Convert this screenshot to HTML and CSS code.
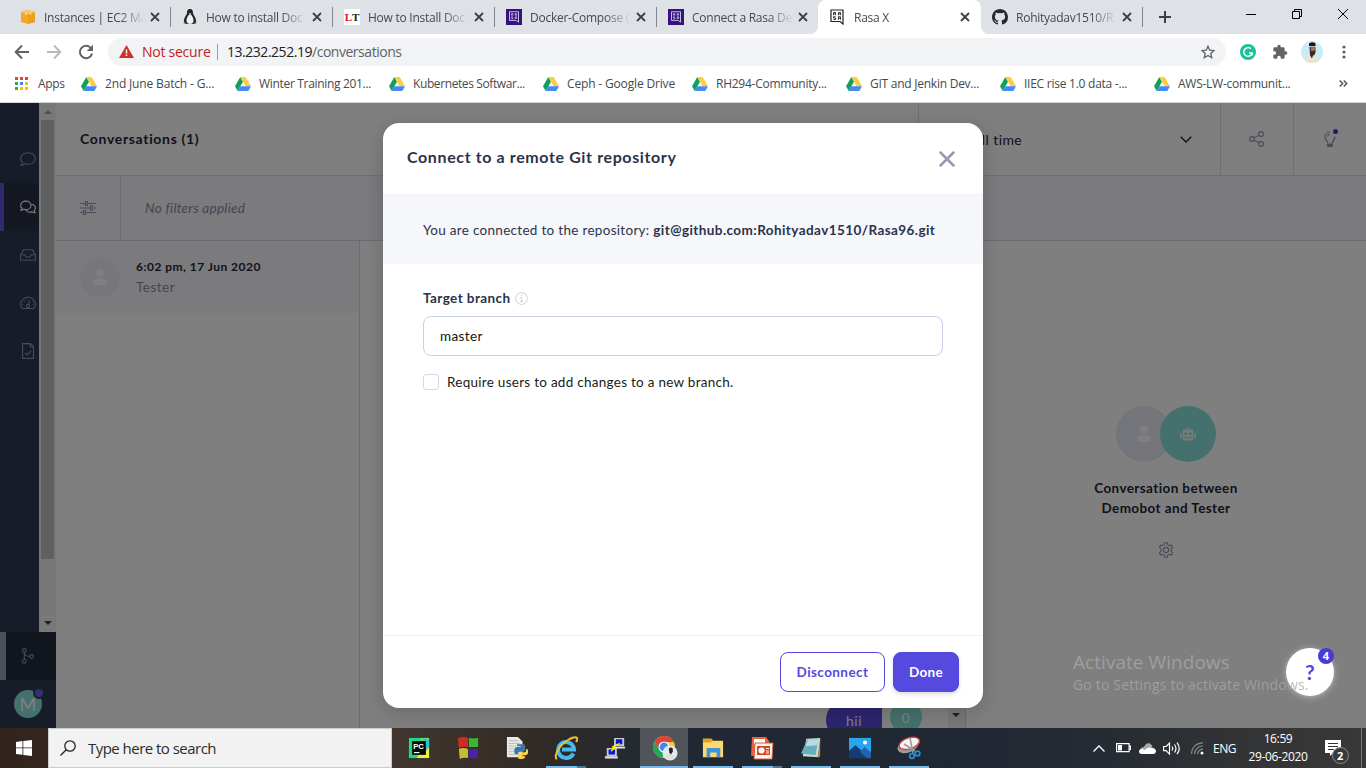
FILE: index.html
```html
<!DOCTYPE html>
<html lang="en">
<head>
<meta charset="utf-8">
<title>Rasa X</title>
<link rel="stylesheet" href="styles.css">
</head>
<body>
<svg class="defs" width="0" height="0">
  <symbol id="close" viewBox="0 0 10 10"><path d="M1 1l8 8M9 1l-8 8" fill="none" stroke="#3c4043" stroke-width="1.8"/></symbol>
  <symbol id="drive" viewBox="0 0 16 14"><path d="M5.3 0L0 9.3 2.7 14 8 4.7z" fill="#11a05c"/><path d="M5.3 0h5.4L16 9.3h-5.4z" fill="#ffcd40"/><path d="M5.3 9.3H16L13.3 14H2.7z" fill="#4688f4"/></symbol>
  <symbol id="rasa" viewBox="0 0 14 16"><path d="M1 1h12v14l-3-2.500H1z" fill="none" stroke="currentColor" stroke-width="1.200"/><path d="M3.500 6.200V3.500h2v1.400h-2M5.500 5v1.200M8.500 6.200V3.500h2v2.700M8.500 5h2M5.500 7.700h-2V9h2v1.500h-2M8.500 10.700v-3h2v3M8.500 9.300h2" fill="none" stroke="currentColor" stroke-width=".9"/></symbol>
  <symbol id="user" viewBox="0 0 14 16"><circle cx="7" cy="4" r="4"/><path d="M0 14c0-3 1.500-5 4-5h6c2.500 0 4 2 4 5 0 1.300-.7 2-2 2H2c-1.300 0-2-.7-2-2z"/></symbol>
</svg>
<div class="screen">
  <div class="tabs">
    <div class="tab"><svg class="fav" viewBox="0 0 16 16"><path d="M1 3l7-2 7 2v10l-7 2-7-2z" fill="#f5a623"/><path d="M8 5l7-2v10l-7 2z" fill="#e9a21f"/><path d="M1 3l7-2 7 2-7 2z" fill="#fbc95c"/><path d="M5 3.500v2.200L7 6V4M9.500 4v2l2-.5V3.500" fill="#ffd98a"/></svg><span class="tt">Instances | EC2 Ma</span><svg class="x"><use href="#close"/></svg></div>
    <div class="tab"><svg class="fav" viewBox="0 0 16 16"><path d="M8 0c2.500 0 3 2 3 4 0 2 3 4 3 8 0 2-1 3-3 3H5c-2 0-3-1-3-3 0-4 3-6 3-8s.5-4 3-4z" fill="#222"/><path d="M8 5c2 1 3.500 4 3.500 6.500S10 15 8 15s-3.500-1-3.500-3.500S6 6 8 5z" fill="#eee"/><path d="M6.500 4h3L8 5.800z" fill="#e9a53a"/><path d="M1 12l3 3H2zM15 12l-3 3h2z" fill="#c98d4b"/></svg><span class="tt">How to install Doc</span><svg class="x"><use href="#close"/></svg></div>
    <div class="tab"><span class="fav lt"><b>L</b>T</span><span class="tt">How to Install Doc</span><svg class="x"><use href="#close"/></svg></div>
    <div class="tab"><span class="fav rs"><svg viewBox="0 0 14 16"><use href="#rasa"/></svg></span><span class="tt">Docker-Compose (</span><svg class="x"><use href="#close"/></svg></div>
    <div class="tab nosep"><span class="fav rs"><svg viewBox="0 0 14 16"><use href="#rasa"/></svg></span><span class="tt">Connect a Rasa De</span><svg class="x"><use href="#close"/></svg></div>
    <div class="tab active"><span class="fav rb"><svg viewBox="0 0 14 16"><use href="#rasa"/></svg></span><span class="tt">Rasa X</span><svg class="x"><use href="#close"/></svg></div>
    <div class="tab"><svg class="fav" viewBox="0 0 16 16"><path fill="#24292e" d="M8 0C3.600 0 0 3.600 0 8c0 3.500 2.300 6.500 5.500 7.600.4.100.5-.2.500-.4v-1.500c-2 .4-2.500-.5-2.700-.9-.1-.2-.5-.9-.8-1.100-.3-.2-.7-.5 0-.5.600 0 1.100.6 1.200.8.700 1.200 1.900.9 2.300.7.100-.5.300-.9.500-1.100-1.800-.2-3.600-.9-3.600-4 0-.9.300-1.600.8-2.100-.1-.2-.4-1 .1-2.100 0 0 .7-.2 2.200.8a7.500 7.500 0 014 0c1.500-1 2.200-.8 2.200-.8.400 1.100.2 1.900.1 2.100.5.600.8 1.300.8 2.100 0 3.100-1.900 3.700-3.700 3.900.3.300.6.800.6 1.500v2.200c0 .2.100.5.500.4A8 8 0 0016 8c0-4.400-3.600-8-8-8z"/></svg><span class="tt">Rohityadav1510/R</span><svg class="x"><use href="#close"/></svg></div>
    <svg class="plus" viewBox="0 0 12 12"><path d="M6 0v12M0 6h12" stroke="#3c4043" stroke-width="2"/></svg>
    <div class="winbtns">
      <svg width="10" height="10"><path d="M0 5.500h10" stroke="#000"/></svg>
      <svg width="10" height="10" fill="none" stroke="#000"><path d="M.5 2.500h7v7h-7zM2.500 2.500v-2h7v7h-2"/></svg>
      <svg width="10" height="10"><path d="M0 0l10 10M10 0L0 10" stroke="#000"/></svg>
    </div>
  </div>
  <div class="toolbar">
    <svg class="nav" viewBox="0 0 16 16" fill="none" stroke="#5f6368" stroke-width="2"><path d="M15 8H2M8 1.500L1.700 8 8 14.500"/></svg>
    <svg class="nav" viewBox="0 0 16 16" fill="none" stroke="#bababc" stroke-width="2"><path d="M1 8h13M8 1.500L14.300 8 8 14.500"/></svg>
    <svg class="nav" viewBox="0 0 16 16"><path d="M13 4.200A6.200 6.200 0 1014.100 9.500" fill="none" stroke="#5f6368" stroke-width="2"/><path d="M15 .7v6.200H8.800z" fill="#5f6368"/></svg>
    <div class="omni">
      <svg width="15" height="13" viewBox="0 0 15 13"><path d="M7.500 0L15 13H0z" fill="#d03025"/><path d="M7.500 4.500v4M7.500 9.500v1.500" stroke="#fff" stroke-width="1.500"/></svg>
      <span class="ns">Not secure</span><i></i><span class="url">13.232.252.19<em>/conversations</em></span>
      <svg class="star" width="14" height="14" viewBox="0 0 14 14"><path d="M7 1.200l1.700 4 4.300.4-3.200 2.900.9 4.200L7 10.500l-3.700 2.200.9-4.200L1 5.600l4.300-.4z" fill="none" stroke="#5f6368" stroke-width="1.300"/></svg>
    </div>
    <svg class="gram" viewBox="0 0 16 16"><circle cx="8" cy="8" r="8" fill="#15c39a"/><path d="M11 4.800A4.300 4.300 0 1012.200 9H9M12.200 9v2.500" fill="none" stroke="#fff" stroke-width="1.500"/></svg>
    <svg class="puz" viewBox="0 0 24 24"><path fill="#5f6368" d="M20.500 11H19V7a2 2 0 00-2-2h-4V3.500a2.500 2.500 0 00-5 0V5H4a2 2 0 00-2 2v3.800h1.500a2.700 2.700 0 010 5.400H2V20a2 2 0 002 2h3.800v-1.500a2.700 2.700 0 015.400 0V22H17a2 2 0 002-2v-4h1.500a2.500 2.500 0 000-5z"/></svg>
    <svg class="ava" viewBox="0 0 22 22"><clipPath id="c"><circle cx="11" cy="11" r="11"/></clipPath><g clip-path="url(#c)"><path fill="#c9ecf6" d="M0 0h22v22H0z"/><path d="M3 22c1-4 2-7 5-8.500l5 1.500c3 0 5 3 6 7z" fill="#e9e4d4"/><path d="M8.500 6h6v4.500c0 2-1 4-2.500 4l-1 3-2-3z" fill="#3b2a25"/><path d="M9.500 5.500h4.500v3.500l-1.500 1H10z" fill="#a57357"/><path d="M8 2.500q3.500-2.500 6.500 0v2.500H8z" fill="#1c1719"/></g></svg>
    <svg class="dots" width="4" height="14"><g fill="#5f6368"><circle cx="2" cy="2" r="1.600"/><circle cx="2" cy="7" r="1.600"/><circle cx="2" cy="12" r="1.600"/></g></svg>
  </div>
  <div class="marks">
    <svg class="apps" width="13" height="13" viewBox="0 0 13 13"><path fill="#ea4335" d="M0 0h3v3H0zM5 0h3v3H5zM10 0h3v3h-3z"/><path fill="#34a853" d="M0 5h3v3H0zM0 10h3v3H0z"/><path fill="#4285f4" d="M5 5h3v3H5z"/><path fill="#fbbc05" d="M10 5h3v3h-3zM5 10h3v3H5zM10 10h3v3h-3z"/></svg>
    <span class="appst">Apps</span>
    <div class="bm"><svg><use href="#drive"/></svg><span class="w1">2nd June Batch - G...</span></div>
    <div class="bm"><svg><use href="#drive"/></svg><span class="w2">Winter Training 201...</span></div>
    <div class="bm"><svg><use href="#drive"/></svg><span class="w3">Kubernetes Softwar...</span></div>
    <div class="bm short"><svg><use href="#drive"/></svg><span class="w1">Ceph - Google Drive</span></div>
    <div class="bm"><svg><use href="#drive"/></svg>RH294-Community...</div>
    <div class="bm"><svg><use href="#drive"/></svg>GIT and Jenkin Dev...</div>
    <div class="bm"><svg><use href="#drive"/></svg>IIEC rise 1.0 data -...</div>
    <div class="bm"><svg><use href="#drive"/></svg>AWS-LW-communit...</div>
    <svg class="more" width="9" height="7" viewBox="0 0 9 7"><path d="M.7.5l3 3-3 3M4.700.5l3 3-3 3" fill="none" stroke="#4a4d51" stroke-width="1.400"/></svg>
  </div>

  <div class="app">
    <div class="side">
      <div class="sidetop">
        <div class="icons">
          <div class="si"><svg viewBox="0 0 16 16"><path d="M1 14.200c1-.8 1.500-1.700 1.600-2.700C1.300 10.400.6 9.200.6 7.500.6 4.200 3.900 1.700 8 1.700s7.400 2.500 7.400 5.800S12.100 13.300 8 13.300c-1 0-2-.2-2.900-.5-1.200.9-2.600 1.400-4.100 1.400z"/></svg></div>
          <div class="si on"><svg viewBox="0 0 16 16"><path d="M.8 11.200c.7-.5 1-1.200 1.100-2C1 8.400.6 7.500.6 6.400.6 4 2.900 2.100 5.800 2.100S11 4 11 6.400s-2.300 4.200-5.200 4.200c-.7 0-1.300 0-1.900-.3-.9.600-2 .9-3.100.9z"/><path d="M11.500 5.200c2.300.3 3.900 1.900 3.900 3.900 0 1.100-.5 2-1.300 2.700.1.800.5 1.500 1.100 2-1.100 0-2.200-.3-3.100-.9-2.600.8-5.200-.1-6.300-2.100"/></svg></div>
          <div class="si"><svg viewBox="0 0 16 16"><path d="M.6 8L3.500 2.800h9L15.400 8v5.200H.6zM.8 7.800H5l1 2.200h4l1-2.200h4.200"/></svg></div>
          <div class="si"><svg viewBox="0 0 16 16"><path d="M2 13.500C1 12.300.6 11 .6 9.600.6 5.500 3.900 2.200 8 2.200s7.400 3.300 7.400 7.400c0 1.400-.4 2.700-1.400 3.900z"/><circle cx="8" cy="11" r="1.600"/><path d="M8.500 9.300l1-4M6 4.800h1M3.700 6.500h1M2.500 9.800h1M12.500 9.800h1M12 6.800h.8"/></svg></div>
          <div class="si"><svg viewBox="0 0 16 16"><path d="M10.500.6H2.600v14.800h10.900V3.700zM10.300.8v3.200h3M5 9.800l2.200 2.100L11 8"/></svg></div>
        </div>
        <div class="sb"><i class="up"></i><b></b><i class="dn"></i></div>
      </div>
      <div class="git"><svg viewBox="0 0 16 16"><circle cx="4.300" cy="2.500" r="1.900"/><circle cx="4.300" cy="13.400" r="1.900"/><circle cx="11.600" cy="8.500" r="1.900"/><path d="M4.300 4.400v7.100M4.300 5q.4 3 5.400 3.500"/></svg></div>
      <div class="me"><span>M<i></i></span></div>
    </div>
    <div class="main">
      <div class="head">
        <h1>Conversations (1)</h1>
        <div class="time"><span>All time</span><svg width="12" height="7" viewBox="0 0 12 7"><path d="M.7.700L6 6 11.300.7" fill="none" stroke="#1f2537" stroke-width="1.400"/></svg></div>
        <div class="hb"><svg viewBox="0 0 16 16"><circle cx="3" cy="8" r="2.400"/><circle cx="12" cy="3" r="2.400"/><circle cx="12" cy="13" r="2.400"/><path d="M5.200 6.900l4.500-2.700M5.200 9.100l4.500 2.700"/></svg></div>
        <div class="hb bulb"><svg viewBox="0 0 16 16"><path d="M5.500 12v-1.400C4 9.500 3 8 3 5.900 3 3.100 5.200 1 8 1M13 5.500c0 2.300-1 4-2.500 5.100V12zM5.400 5.500C5.500 4.300 6.400 3.500 7.700 3.400"/><path d="M5.700 13h4.600v2.400H5.700z" fill="#9098af"/></svg><i></i></div>
      </div>
      <div class="filters"><div class="fi"><svg viewBox="0 0 16 14"><path d="M0 2.500h5M8 2.500h8M0 7h10M13 7h3M0 11.500h3M6 11.500h10" stroke-width="1.200"/><path d="M5.500.5h2v4h-2zM10.500 5h2v4h-2zM3.500 9.500h2v4h-2z"/></svg></div><em>No filters applied</em></div>
      <div class="content">
        <div class="list"><div class="conv"><span class="pic"><svg viewBox="0 0 14 16"><use href="#user"/></svg></span><div><b>6:02 pm, 17 Jun 2020</b><p>Tester</p></div></div></div>
        <div class="chat"><div class="msgs"><span class="bubble">hii</span><span class="zero">0</span></div><div class="sb2"><i class="dn"></i></div></div>
        <div class="info">
          <div class="pair"><span class="u"><svg viewBox="0 0 14 16"><use href="#user"/></svg></span><span class="r"><svg viewBox="0 0 16 14"><path fill="#fff" d="M7.300 0h1.400v2.500H12c.8 0 1.400.6 1.400 1.400V12c0 .8-.6 1.400-1.400 1.400H4c-.8 0-1.400-.6-1.400-1.400V3.900c0-.8.600-1.400 1.400-1.400h3.300zM0 6h1.800v5H0zM14.200 6H16v5h-1.800z"/><circle cx="5.600" cy="6.800" r="1.200" fill="#75d0c5"/><circle cx="10.400" cy="6.800" r="1.200" fill="#75d0c5"/><path d="M4.700 10.500h1.500M7.300 10.500h1.500M9.900 10.500h1.500" stroke="#75d0c5"/></svg></span></div>
          <h2>Conversation between<br>Demobot and Tester</h2>
          <svg class="gear" viewBox="0 0 16 16"><path d="M6.600.8h2.800l.4 2 1.500.9 1.900-.7 1.400 2.400-1.500 1.300v2.600l1.500 1.300-1.400 2.400-1.900-.7-1.500.9-.4 2H6.600l-.4-2-1.500-.9-1.900.7-1.400-2.400 1.500-1.300V6.700L1.400 5.400 2.800 3l1.900.7 1.500-.9z"/><circle cx="8" cy="8" r="2.600"/></svg>
        </div>
      </div>
    </div>
    <div class="shade">
      <div class="modal">
        <div class="mh"><h3>Connect to a remote Git repository</h3><svg width="16" height="16"><path d="M1.500 1.500l13 13M14.500 1.500l-13 13" stroke="#939bb4" stroke-width="2.500" stroke-linecap="round"/></svg></div>
        <div class="note">You are connected to the repository: <b>git@github.com:Rohityadav1510/Rasa96.git</b></div>
        <div class="mb">
          <label>Target branch <svg width="13" height="13" viewBox="0 0 13 13" fill="none" stroke="#c9d0e4"><circle cx="6.500" cy="6.500" r="5.900"/><path d="M5.200 5.500h1.500v4M5 9.500h3.200M6 3.200h1.200"/></svg></label>
          <div class="input">master</div>
          <div class="check"><i></i>Require users to add changes to a new branch.</div>
        </div>
        <div class="mf"><div class="btn">Disconnect</div><div class="btn done">Done</div></div>
      </div>
    </div>
    <div class="help">?<i>4</i></div>
    <div class="water"><p>Activate Windows</p><span>Go to Settings to activate Windows.</span></div>
  </div>

  <div class="task">
    <div class="start"><svg width="16" height="16"><path fill="#fff" d="M0 2l6.500-.9v6.400H0zM7.300 1L16 0v7.500H7.300zM0 8.300h6.500v6.500L0 14zM7.300 8.300H16V16l-8.700-1.100z"/></svg></div>
    <div class="search"><svg width="16" height="16"><circle cx="10" cy="6" r="5.200" fill="none" stroke="#222" stroke-width="1.300"/><path d="M6.200 9.800L.5 15.500" stroke="#222" stroke-width="1.300"/></svg>Type here to search</div>
    <div class="prog">
      <div class="p"><svg viewBox="0 0 24 24"><path d="M1 1h22v22H1z" fill="#21d789"/><path d="M13 1h10v11z" fill="#7ddf68"/><path d="M16 5h7v18H10z" fill="#e8f23c"/><path d="M16 1l7 2v8l-4 5z" fill="#2ac6cf"/><path d="M4.500 4.500h15v15h-15z" fill="#080808"/><path d="M6.500 17h6" stroke="#fff" stroke-width="1.300"/><text x="5.600" y="13">PC</text></svg></div>
      <div class="p"><svg viewBox="0 0 24 24"><path d="M1 1q6-2 11 0v10q-5-1-10 1z" fill="#d02b20"/><path d="M13 1q5 1 10 0v10H13z" fill="#38b931"/><path d="M2 13q5-2 10 0v10q-5-1-9 1z" fill="#c4bc36"/><path d="M13 13h10v9q-5 2-10 1z" fill="#4a21a9"/></svg></div>
      <div class="p"><svg viewBox="0 0 24 24"><path d="M1 0h12l5 5v17H1z" fill="#e9e9e6"/><path d="M3 4h10M3 7h12M3 10h8M3 13h6M3 16h6M3 19h7" stroke="#b6b6b6"/><path d="M13 8h6q2 0 2 2v4q0 2-2 2h-4q-2 0-2 3h-2q-2 0-2-4t3-4h4v-1h-4V8z" fill="#3c76a9"/><path d="M22 13q3 0 2 5-1 2-3 2h-4v1h4q0 3-4 3t-4-2v-3q0-2 2-2h4q3 0 3-2z" fill="#ffd44a"/></svg></div>
      <div class="p run two"><svg class="big" viewBox="0 0 24 24"><path d="M19.500 17.500Q17 22 12 22a8 8 0 118-8.500H8" fill="none" stroke="#48b9ed" stroke-width="4"/><path d="M3 23C-1 21 5 9 14 4q7-4 9-2 1 1-1 4" fill="none" stroke="#f1c22e" stroke-width="2"/></svg></div>
      <div class="p"><svg viewBox="0 0 24 24"><path d="M11 1h11v9H11zM3 12h11v9H3z" fill="#c9c9c9"/><path d="M13 2.500h7v5.500h-7zM5 13.500h7V19H5z" fill="#0915d8"/><path d="M10 10.500h13v2H10zM1 21h14v2.500H1z" fill="#e3e3e3"/><path d="M17 7l-5 3 1 1.500-5 4 2-3.500-1-1.500z" fill="#ff0" stroke="#ee0"/></svg></div>
      <div class="p chrome"><svg viewBox="0 0 26 26"><circle cx="12" cy="12" r="11" fill="#f6c944"/><path d="M12 1a11 11 0 0110 6H12L7 14 2.500 6.500A11 11 0 0112 1z" fill="#dc4437"/><path d="M2.500 6.500L8 15l5 3-3 5A11 11 0 012.500 6.500z" fill="#25a45c"/><circle cx="12" cy="12" r="5.500" fill="#fff"/><circle cx="12" cy="12" r="4.400" fill="#4285f4"/><circle cx="18" cy="18" r="7.500" fill="#d9edf3"/><path d="M13 23q1-4 4.500-4t5.500 3q-4 4.500-10 1z" fill="#e4decd"/><path d="M16.800 13.500q2.200-2 4 0v3l-1.800 3-1.700-2z" fill="#30211e"/></svg></div>
      <div class="p run"><svg viewBox="0 0 24 24"><path d="M1 2h9l2 2h11v18H1z" fill="#ffd86f"/><path d="M1 2h9l2 2-2 2H1z" fill="#e0a520"/><path d="M5 12h15v10h-4v-5H9v5H5z" fill="#3c95df"/></svg></div>
      <div class="p run two"><svg class="big" viewBox="0 0 24 24"><path d="M2 1h14l3 4v15H1z" fill="#e7623d"/><path d="M4 3h11v5H4z" fill="#fff"/><path d="M5 7h18l-1 16H4z" fill="#fbf3ef" stroke="#d65c35"/><path d="M7 10h13v9H7z" fill="#db461e"/><circle cx="11.500" cy="14.500" r="3" fill="#fff"/><path d="M16 12.500h3M16 15h3M16 17h3" stroke="#fff"/></svg></div>
      <div class="p run"><svg viewBox="0 0 24 24"><path d="M7 2l15-1-1 21-18-1z" fill="#c8ddd9"/><path d="M8 3h12l-3 17L1 18z" fill="#69aebc"/><path d="M9 3h11l-1 6-13 1z" fill="#b5dde0"/><path d="M22 2v19l-3 1z" fill="#a88a46"/></svg></div>
      <div class="p run"><svg viewBox="0 0 24 24"><path d="M0 1h24v22H0z" fill="#29a5ee"/><path d="M0 15l7-6 16 14H0z" fill="#143c77"/><path d="M12 16l5-5 7 6v6h-5z" fill="#2461b6"/><circle cx="17.500" cy="6" r="2.200" fill="#fff"/></svg></div>
      <div class="p run"><svg class="big" viewBox="0 0 24 24"><ellipse cx="11" cy="10" rx="11" ry="6.500" transform="rotate(-22 11 10)" fill="#9b9b9b"/><ellipse cx="12.500" cy="7.500" rx="10.500" ry="5.500" transform="rotate(-18 12 8)" fill="#f4f4f4" stroke="#df3e3f" stroke-width="1.500"/><path d="M13 2l3 15M7 8l11 7" stroke="#999" stroke-width="1.500"/><circle cx="15" cy="20" r="2.300" fill="none" stroke="#278bd0" stroke-width="1.800"/><circle cx="20.500" cy="17.500" r="2.300" fill="none" stroke="#278bd0" stroke-width="1.800"/></svg></div>
    </div>
    <div class="tray">
      <svg class="t1" width="12" height="7"><path d="M.5 6.500L6 1l5.500 5.500" fill="none" stroke="#fff" stroke-width="1.300"/></svg>
      <svg class="t2" width="15" height="10"><path d="M.6.600h12.500v8H.6zM13.500 3h1v3.500h-1" fill="none" stroke="#fff" stroke-width="1.200"/><path d="M2 2h4v5.500H2z" fill="#fff"/></svg>
      <svg class="t3" width="17" height="11"><path d="M1 8a4 4 0 014-4q2-5 6-3.500 2 1 2.500 3.500z" fill="#a8a9ab"/><path d="M3 11q-3 0-3-2.500T3 6q2 0 3 .8Q8 4 12 4.500q5 .5 5 4-.5 2.500-3 2.500z" fill="#fff"/></svg>
      <svg class="t4" width="17" height="13" fill="none" stroke="#fff" stroke-width="1.200"><path d="M.6 4.500h2.500l3.400-3.400v11L3.100 8.700H.6zM9 4.500q1.500 2 0 4M11.500 2.500q3 4 0 8M14 .7q4.500 6 0 11.500"/></svg>
      <svg class="t5" width="14" height="13" fill="none" stroke="#858789" stroke-width="1.200"><path d="M.6 12A11 11 0 0112 .8M3.600 12A8 8 0 0112 4M6.600 12A5 5 0 0112 7.200"/><circle cx="11" cy="11" r="1.500" fill="#fff" stroke="none"/></svg>
      <span class="eng">ENG</span>
      <div class="clock">16:59<br>29-06-2020</div>
      <div class="act"><svg width="24" height="24" viewBox="0 0 24 24"><path d="M0 0h16v13H8l-3 3v-3H0z" fill="#fff"/><path d="M3 3.500h10M3 6.500h10M3 9.500h6" stroke="#333"/><circle cx="15.500" cy="15.500" r="8" fill="#3a3a3b" stroke="#8a8b8b"/></svg><span>2</span></div>
      <i class="edge"></i>
    </div>
  </div>
</div>
</body>
</html>
```
FILE: styles.css
```css
* { box-sizing: border-box; }
body { margin: 0; overflow: hidden; font-family: "Open Sans", sans-serif; }
h1, h2, h3, p { margin: 0; }
.defs { position: absolute; }
.screen { width: 1366px; height: 768px; display: flex; flex-direction: column; overflow: hidden; background: #fff; }
svg { flex: none; display: block; }

.tabs { height: 34px; flex: none; background: #dee1e6; display: flex; align-items: center; padding-left: 9px; font-size: 12px; letter-spacing: -.25px; color: #45494d; }
.tab { width: 162px; height: 34px; display: flex; align-items: center; padding: 0 11px; background: linear-gradient(#80868b, #80868b) right center / 1px 20px no-repeat; }
.tab.nosep { background: none; }
.tab.active { position: relative; width: 163px; margin-left: -1px; padding-left: 12px; background: #fff; border-radius: 8px 8px 0 0; }
.tab.active::before, .tab.active::after { content: ""; position: absolute; bottom: 0; width: 8px; height: 8px; }
.tab.active::before { left: -8px; background: radial-gradient(circle at 0 0, transparent 7.5px, #fff 8.5px); }
.tab.active::after { right: -8px; background: radial-gradient(circle at 100% 0, transparent 7.5px, #fff 8.5px); }
.fav { width: 16px; height: 16px; flex: none; }
.tt { width: 102px; margin-left: 8px; white-space: nowrap; -webkit-mask-image: linear-gradient(90deg, #000 75px, transparent 101px); mask-image: linear-gradient(90deg, #000 75px, transparent 101px); }
.x { width: 10px; height: 10px; margin-left: 4px; }
.lt { background: #fff; font: 700 11px/16px "Liberation Serif", serif; letter-spacing: 0; text-align: center; color: #222; }
.lt b { color: #e31515; }
.rs { background: #35127d; color: #d9cfee; padding: 2px; }
.rs svg { width: 12px; height: 12px; }
.rb svg { width: 14px; height: 16px; }
.rb { color: #222; }
.plus { width: 12px; height: 12px; margin-left: 16px; }
.winbtns { margin-left: auto; display: flex; gap: 36px; padding-right: 18px; margin-top: -6px; }

.toolbar { height: 36px; flex: none; display: flex; align-items: center; padding-left: 14px; }
.nav { width: 16px; height: 16px; margin-right: 16px; }
.omni { width: 1118px; height: 28px; margin-left: -2px; border-radius: 14px; background: #f1f3f4; display: flex; align-items: center; padding: 0 11px 1px 11px; font-size: 14px; letter-spacing: -.25px; }
.omni .ns { color: #c5221f; margin-left: 8px; width: 75px; white-space: nowrap; }
.omni i { width: 1px; height: 16px; background: #9a9ea3; }
.url { margin-left: 9px; color: #202124; letter-spacing: -.47px; }
.url em { font-style: normal; color: #5f6368; }
.star { margin-left: auto; }
.gram { width: 16px; height: 16px; margin-left: 14px; }
.puz { width: 16px; height: 16px; margin-left: 16px; }
.ava { width: 22px; height: 22px; margin-left: 13px; }
.dots { margin-left: 19px; }

.marks { height: 33px; flex: none; border-bottom: 1px solid #d5d6d9; display: flex; align-items: center; padding: 0 18px 5px 15px; font-size: 12px; letter-spacing: -.25px; color: #45494d; white-space: nowrap; }
.appst { margin-left: 10px; width: 43px; letter-spacing: -.3px; }
.bm { width: 154px; display: flex; align-items: center; flex: none; }
.bm.short { width: 149px; }
.bm svg { width: 16px; height: 14px; margin-right: 8px; }
.w1 { letter-spacing: -.16px; }
.w2 { letter-spacing: -.32px; }
.w3 { letter-spacing: -.4px; }
.more { margin-left: auto; }

.app { height: 625px; flex: none; position: relative; display: flex; overflow: hidden; font-family: Lato, sans-serif; font-size: 13.500px; letter-spacing: .27px; color: #1f2537; }
.side { width: 56px; flex: none; background: #2d3a50; display: flex; flex-direction: column; }
.sidetop { height: 529px; display: flex; }
.icons { width: 39px; padding-top: 32px; overflow: hidden; }
.si { height: 48px; width: 56px; display: flex; align-items: center; justify-content: center; }
.si svg, .git svg, .hb svg, .fi svg, .gear { width: 16px; height: 16px; fill: none; stroke: #8f96ae; stroke-width: 1.100; }
.si.on { background: linear-gradient(90deg, #6254dd 4px, #2a3144 4px); }
.si.on svg { stroke: #fff; }
.sb { width: 17px; background: #f1f1f1; display: flex; flex-direction: column; align-items: center; }
.up, .dn { width: 0; height: 0; border: 4px solid transparent; }
.up { border-top: 0; border-bottom-color: #9d9d9d; margin: 7px 0; }
.dn { border-bottom: 0; border-top-color: #404040; }
.sb b { width: 13px; height: 439px; margin-top: -1px; background: #c1c1c1; }
.sb .dn { margin-top: 62px; }
.git { height: 48px; background: #222a3c; border-left: 6px solid #979eb3; display: flex; align-items: center; padding-left: 14px; }
.me { height: 48px; display: flex; align-items: center; justify-content: center; }
.me span { position: relative; width: 28px; height: 28px; border-radius: 50%; background: #88e2da; color: #fff; font-size: 18px; line-height: 29px; text-align: center; }
.me i { position: absolute; right: -3px; top: -3px; width: 12px; height: 12px; border-radius: 50%; background: #6c5ce8; border: 2px solid #2d3a50; }

.main { flex: 1; display: flex; flex-direction: column; background: #fff; }
.head { height: 73px; border-bottom: 1px solid #dcdfec; display: flex; align-items: stretch; }
.head h1 { flex: 1; padding: 27px 0 0 24px; font-size: 14px; line-height: 18px; letter-spacing: .67px; }
.time { width: 302px; border-left: 1px solid #dcdfec; display: flex; align-items: center; justify-content: space-between; padding: 0 28px 0 53px; font-size: 14px; letter-spacing: .4px; }
.hb { width: 73px; border-left: 1px solid #dcdfec; display: flex; align-items: center; justify-content: center; }
.bulb { position: relative; }
.bulb i { position: absolute; left: 39px; top: 26px; width: 5px; height: 5px; border-radius: 50%; background: #4a36d8; }
.filters { height: 65px; background: #f6f7fb; border-bottom: 1px solid #d2d6e6; display: flex; align-items: center; color: #858ca3; }
.fi { width: 65px; height: 64px; border-right: 1px solid #d2d6e6; padding: 24px; }
.fi svg { height: 14px; margin-top: 1px; }
.filters em { margin: -1px 0 0 24px; letter-spacing: .28px; }
.content { flex: 1; display: flex; }
.list { width: 304px; border-right: 1px solid #d2d6e6; }
.conv { height: 72px; background: #f6f7fb; display: flex; align-items: center; padding-left: 24px; gap: 16px; }
.pic { width: 40px; height: 40px; border-radius: 50%; background: #edeff5; display: flex; align-items: center; justify-content: center; fill: #fff; }
.pic svg, .u svg { width: 14px; height: 16px; }
.conv b { font-size: 12px; line-height: 20px; letter-spacing: .48px; display: block; }
.conv p { line-height: 20px; color: #858ca3; letter-spacing: .5px; }
.chat { width: 606px; display: flex; align-items: flex-end; border-right: 1px solid #d2d6e6; }
.msgs { flex: 1; height: 28px; display: flex; justify-content: flex-end; gap: 8px; padding-right: 26px; color: #fff; font-size: 14px; letter-spacing: .5px; }
.bubble { width: 56px; height: 40px; padding: 12px 0 0 20px; border-radius: 20px 8px 0 20px; background: #5a4be0; }
.zero { width: 32px; height: 32px; border-radius: 50%; background: #88e2da; text-align: center; line-height: 33px; margin-top: 1px; }
.sb2 { width: 17px; height: 20px; background: #f1f1f1; padding: 9px 0 0 4px; }
.info { flex: 1; display: flex; flex-direction: column; align-items: center; padding-top: 162px; }
.pair { display: flex; padding-top: 3px; }
.pair span { width: 56px; height: 56px; border-radius: 50%; display: flex; align-items: center; justify-content: center; }
.pair .u { background: #e9ebf4; fill: #fff; }
.pair .r { background: #88e2da; margin-left: -12px; }
.r svg { width: 16px; height: 14px; opacity: .8; }
.info h2 { margin-top: 16px; font-size: 13.500px; line-height: 20px; text-align: center; letter-spacing: .4px; }
.gear { margin-top: 24px; }

.shade { position: absolute; inset: 0; background: rgba(0, 0, 0, .5); display: flex; justify-content: center; padding-top: 20px; }
.modal { width: 600px; height: 585px; background: #fff; border-radius: 16px; box-shadow: 0 4px 20px rgba(0, 0, 0, .18); display: flex; flex-direction: column; color: #2b3348; }
.mh { height: 72px; border-bottom: 1px solid #eef0f6; display: flex; justify-content: space-between; padding: 24px 28px 0 24px; }
.mh h3 { font-size: 16px; line-height: 20px; letter-spacing: .62px; }
.mh svg { margin-top: 4px; }
.note { height: 69px; background: #f5f7fb; padding: 25px 40px 0; line-height: 20px; letter-spacing: .3px; white-space: nowrap; }
.note b { letter-spacing: .42px; }
.mb { flex: 1; padding: 24px 40px; }
.mb label { display: flex; align-items: center; gap: 4px; font-weight: 700; line-height: 20px; letter-spacing: .42px; }
.input { height: 40px; border: 1px solid #c9d1e4; border-radius: 8px; margin-top: 8px; padding: 0 16px; line-height: 38px; color: #111; letter-spacing: .4px; }
.check { display: flex; align-items: center; gap: 8px; margin-top: 16px; line-height: 20px; color: #1a1a1a; }
.check i { width: 16px; height: 16px; border: 1px solid #d3d9ea; border-radius: 3px; }
.mf { height: 73px; border-top: 1px solid #f0f1f5; display: flex; justify-content: flex-end; gap: 8px; padding: 16px 24px; }
.btn { height: 40px; width: 105px; border: 1px solid #5448df; border-radius: 8px; color: #5448df; font-weight: 700; line-height: 38px; text-align: center; letter-spacing: .42px; }
.btn.done { width: 66px; background: #5549e0; color: #fff; letter-spacing: .3px; box-shadow: 0 2px 4px rgba(0, 0, 0, .15); }
.help { position: absolute; left: 1286px; top: 545px; width: 48px; height: 48px; border-radius: 50%; background: #fff; box-shadow: 0 1px 6px rgba(255, 255, 255, .45); color: #5143de; font-size: 21px; font-weight: 700; line-height: 48px; text-align: center; }
.help i { position: absolute; left: 32px; top: 0; width: 16px; height: 16px; border-radius: 50%; background: #4b3ad5; color: #fff; font: 700 11px/16px "Open Sans", sans-serif; letter-spacing: 0; }
.water { position: absolute; left: 1073px; top: 545px; font-family: "Open Sans", sans-serif; color: rgba(168, 168, 168, .78); white-space: nowrap; letter-spacing: .05px; }
.water p { font-size: 19px; line-height: 28px; }
.water span { display: block; font-size: 14px; line-height: 18px; letter-spacing: .18px; }

.task { height: 40px; flex: none; display: flex; background: linear-gradient(90deg, #30241c 0, #40352f 400px, #332b25 530px, #222933 650px, #1f2733 950px, #242b33 1090px, #333435 1250px, #393838 1366px); color: #fff; }
.start { width: 48px; display: flex; align-items: center; justify-content: center; }
.search { width: 344px; background: #f2f2f2; border: 1px solid #ccc; display: flex; align-items: center; gap: 12px; padding-left: 11px; color: #2b2b2b; font-size: 15px; letter-spacing: -.53px; }
.prog { display: flex; padding-left: 2px; }
.p { width: 49px; display: flex; align-items: center; justify-content: center; }
.p svg { width: 22px; height: 22px; }
.p svg.big { width: 24px; height: 24px; }
.p text { font: 700 8.500px "Liberation Sans", sans-serif; letter-spacing: 0; fill: #fff; }
.run { background: linear-gradient(#76b9ed, #76b9ed) 5px 100% / 40px 2px no-repeat; }
.two { background: linear-gradient(90deg, #76b9ed 31px, #4e7899 31px) 5px 100% / 40px 2px no-repeat; }
.chrome { width: 48px; margin-left: 1px; background: #51555b; border-bottom: 2px solid #76b9ed; padding: 2px 0 0 2px; }
.chrome svg { width: 26px; height: 26px; }
.tray { margin-left: auto; display: flex; align-items: center; font-size: 12px; width: 273px; }
.t2 { margin-left: 11px; }
.t3 { margin-left: 8px; }
.t4 { margin-left: 7px; }
.t5 { margin-left: 11px; }
.eng { margin-left: 8px; width: 25px; letter-spacing: -.5px; }
.clock { width: 60px; margin-left: 10px; text-align: center; line-height: 18px; letter-spacing: -.38px; white-space: nowrap; }
.act { position: relative; margin: 8px 0 0 17px; }
.act span { position: absolute; left: 12px; top: 7px; font-weight: 700; font-size: 11px; line-height: 17px; }
.edge { width: 1px; height: 40px; background: #77797a; margin-left: auto; margin-right: 4px; }
```
